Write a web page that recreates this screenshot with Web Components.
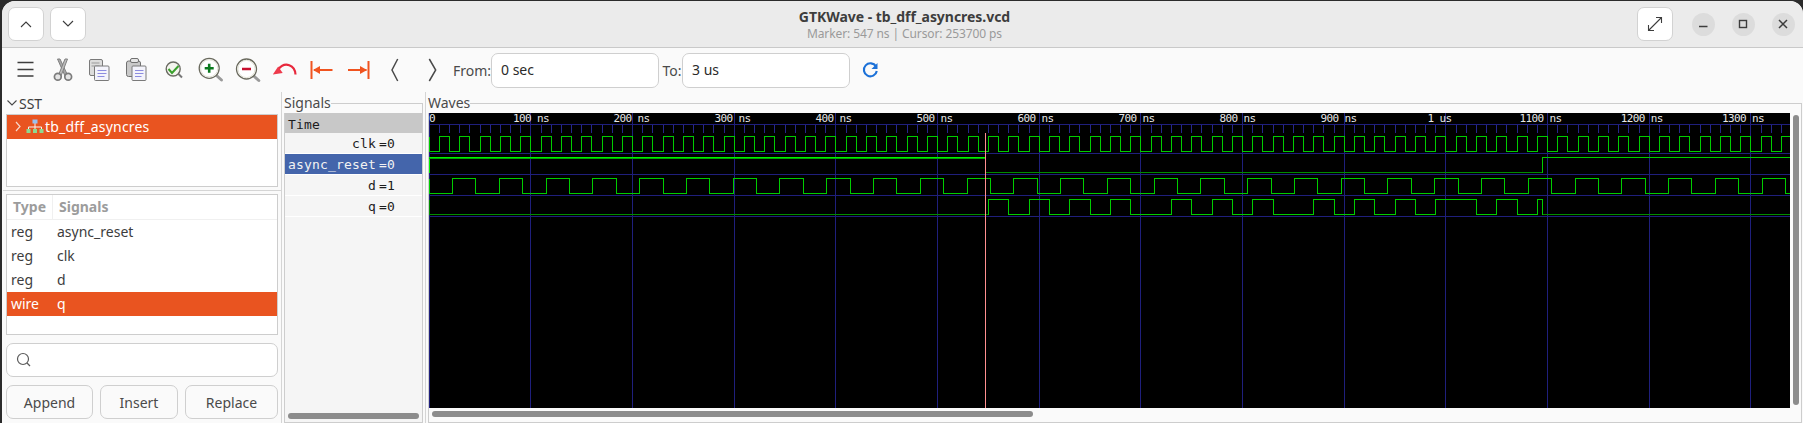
<!DOCTYPE html>
<html lang="en">
<head>
<meta charset="utf-8">
<title>GTKWave - tb_dff_asyncres.vcd</title>
<style>
  html, body { margin: 0; height: 100%; overflow: hidden; background: #2b2b2b; }
  body { font-family: "Noto Sans", sans-serif; font-size: 14px; color: #3d3d3d; }
</style>
</head>
<body>
<gw-window>
  <gw-headerbar slot="header" heading="GTKWave - tb_dff_asyncres.vcd" sub="Marker: 547 ns | Cursor: 253700 ps"></gw-headerbar>
  <gw-toolbar slot="toolbar"></gw-toolbar>
  <gw-sst-pane slot="panes"></gw-sst-pane>
  <gw-signal-pane slot="panes"></gw-signal-pane>
  <gw-wave-pane slot="panes"></gw-wave-pane>
</gw-window>

<script>
/**
 * Small helper, every element gets an open shadow root from a string.
 *
 * @param {string} name - The tag name.
 * @param {string} html - Markup and styles of the shadow root.
 * @param {Function} [ready] - Called with the element after the root is filled.
 */
function define (name, html, ready) {
  const template = document.createElement('template')
  template.innerHTML = html
  customElements.define(name, class extends HTMLElement {
    constructor () {
      super()
      this.attachShadow({ mode: 'open' }).appendChild(template.content.cloneNode(true))
    }

    connectedCallback () {
      if (ready) ready(this)
    }
  })
}

define('gw-window', `
  <style>
    :host { display: flex; flex-direction: column; height: 422px; margin: 1px 0 0 2px; background: #fafafa; border-radius: 13px 13px 0 0; overflow: hidden; }
    .panes { display: flex; flex: 1; min-height: 0; }
  </style>
  <slot name="header"></slot>
  <slot name="toolbar"></slot>
  <div class="panes"><slot name="panes"></slot></div>
`)

define('gw-headerbar', `
  <style>
    :host { display: grid; grid-template-columns: 1fr auto 1fr; align-items: start; height: 47px; box-sizing: border-box; background: #ebebeb; border-bottom: 1px solid #c9c9c9; }
    .left, .right { display: flex; align-items: center; padding-top: 6px; }
    .left { gap: 6px; padding-left: 6px; }
    .right { justify-content: flex-end; padding-right: 8.500px; }
    .btn { width: 36px; height: 34px; box-sizing: border-box; background: #fff; border: 1px solid #d2d2d2; border-radius: 7px; display: flex; align-items: center; justify-content: center; }
    .right .btn { margin-right: 2px; }
    .round { width: 23px; height: 23px; border-radius: 50%; background: #dcdcdc; margin-left: 17px; display: flex; align-items: center; justify-content: center; }
    .center { text-align: center; padding: 6px 0 0 4px; }
    h1 { margin: 0; font: 700 14px/20px "Noto Sans", sans-serif; color: #3d3d3d; letter-spacing: -.04px; }
    p { margin: -1px 0 0; font: 12px/16px "Noto Sans", sans-serif; color: #9a9a9a; letter-spacing: -.1px; }
    svg { display: block; fill: none; stroke: #3d3d3d; }
  </style>
  <div class="left">
    <div class="btn"><svg width="14" height="10" stroke-width="1.100"><path d="M2 8 7 3l5 5"/></svg></div>
    <div class="btn"><svg width="14" height="10" stroke-width="1.100"><path d="M2 2l5 5 5-5"/></svg></div>
  </div>
  <div class="center"><h1 id="heading"></h1><p id="sub"></p></div>
  <div class="right">
    <div class="btn"><svg width="18" height="18" stroke-width="1.100"><path d="M2.500 15.500 15.500 2.500M10 2.500h5.500V8M2.500 10v5.500H8"/></svg></div>
    <div class="round"><svg width="10" height="10" stroke-width="1.400"><path d="M1 7.500h8.500"/></svg></div>
    <div class="round"><svg width="10" height="10" stroke-width="1.400"><rect x="1.500" y="1.500" width="7" height="7"/></svg></div>
    <div class="round"><svg width="10" height="10" stroke-width="1.500"><path d="M1 1l8 8M9 1 1 9"/></svg></div>
  </div>
`, el => {
  el.shadowRoot.querySelector('#heading').textContent = el.getAttribute('heading')
  el.shadowRoot.querySelector('#sub').textContent = el.getAttribute('sub')
})

// toolbar icons, drawn in a 37x44 box per button
const ICONS = {
  menu: '<path d="M10.500 14.500h16M10.500 21.500h16M10.500 28h16" stroke="#3d3d3d" stroke-width="1.500"/>',
  cut: `<path d="M13.500 11h2.500l7.500 16-2.500 1z" fill="#a8a8a8" stroke="#808080"/>
    <path d="M23.500 11H21l-6.500 16 2.500 1z" fill="#bcbcbc" stroke="#808080"/>
    <circle cx="13.800" cy="28.700" r="3.400" fill="#e4e4e4" stroke="#7c7c7c" stroke-width="1.700"/>
    <circle cx="24.200" cy="28.700" r="3.400" fill="#e4e4e4" stroke="#7c7c7c" stroke-width="1.700"/>`,
  copy: `<rect x="8.500" y="11.500" width="13" height="16" rx="1.500" fill="#dcdcdc" stroke="#7a7a7a"/>
    <path d="M10.500 15h8M10.500 18h8" stroke="#999"/>
    <rect x="13.500" y="18" width="14.500" height="14.500" rx="1" fill="#f3f3fb" stroke="#7a7a7a"/>
    <path d="M16.500 22.500h9M16.500 25.500h9M16.500 28.500h7" stroke="#8c8ce0"/>`,
  paste: `<rect x="8.500" y="13" width="14" height="15.500" rx="2" fill="#c9c9c9" stroke="#707070"/>
    <rect x="12.500" y="10.500" width="8" height="4" rx="1.500" fill="#e6e6e6" stroke="#707070"/>
    <rect x="14" y="18" width="14" height="14.500" rx="1" fill="#f3f3fb" stroke="#7a7a7a"/>
    <path d="M17 22.500h8.500M17 25.500h8.500M17 28.500h6.500" stroke="#8c8ce0"/>`,
  check: `<path d="M23.500 26l3.500 3.500" stroke="#777" stroke-width="2"/>
    <circle cx="18.200" cy="21" r="7" fill="#f4f4ee" stroke="#6a6a62" stroke-width="1.400"/>
    <path d="M13.500 21l3.500 4 6.500-7" fill="none" stroke="#3aa02c" stroke-width="2"/>`,
  zoomin: `<path d="M24.500 27.500l5 4.500" stroke="#9a9a9a" stroke-width="3" stroke-linecap="round"/>
    <circle cx="17.200" cy="20.300" r="10" fill="#fff" stroke="#6a6a5e" stroke-width="1.300"/>
    <circle cx="17.200" cy="20.300" r="8.600" fill="none" stroke="#e2e2d6"/>
    <path d="M12.700 20.300h9M17.200 15.800v9" stroke="#0b7a1e" stroke-width="2.600"/>`,
  zoomout: `<path d="M24.800 28l5 4.500" stroke="#9a9a9a" stroke-width="3" stroke-linecap="round"/>
    <circle cx="17.500" cy="21" r="10" fill="#fff" stroke="#6a6a5e" stroke-width="1.300"/>
    <circle cx="17.500" cy="21" r="8.600" fill="none" stroke="#e2e2d6"/>
    <path d="M13 21h9" stroke="#c8102e" stroke-width="2.600"/>`,
  undo: `<path d="M29.500 26.500C29 17 19 13 12.500 21" fill="none" stroke="#e8283c" stroke-width="2.200"/>
    <path d="M6.800 26.500 12.200 18.500l4.500 6.500z" fill="#ee3a4c"/>`,
  first: `<path d="M8.500 13v18M11 22h18.500" stroke="#f0531f" stroke-width="2"/>
    <path d="M10 22l7-4v8z" fill="#f0531f"/>`,
  last: `<path d="M28.500 13v18M8 22h18.500" stroke="#f0531f" stroke-width="2"/>
    <path d="M27 22l-7-4v8z" fill="#f0531f"/>`,
  prev: '<path d="M20.700 11 15 22l5.700 11" fill="none" stroke="#4a4a4a" stroke-width="1.500"/>',
  next: '<path d="M15.300 11 21.700 22l-6.400 11" fill="none" stroke="#4a4a4a" stroke-width="1.500"/>',
  refresh: `<path d="M24 18.500a6.500 6.500 0 1 0 .8 4.500" fill="none" stroke="#1c71d8" stroke-width="2.100"/>
    <path d="M25.500 15v6h-6z" fill="#1c71d8"/>`
}

define('gw-tool', `
  <style>
    :host { display: block; width: 37px; height: 44px; flex: none; }
    svg { display: block; }
  </style>
  <svg width="37" height="44" viewBox="0 0 37 44"></svg>
`, el => {
  el.shadowRoot.querySelector('svg').innerHTML = ICONS[el.getAttribute('icon')]
})

define('gw-entry', `
  <style>
    :host { display: flex; align-items: center; box-sizing: border-box; height: 35px; padding: 0 0 2px 9px; background: #fff; border: 1px solid #cfcfcf; border-radius: 7px; font: 14px "Noto Sans", sans-serif; color: #2a2a2a; }
  </style>
  <slot></slot>
`)

define('gw-toolbar', `
  <style>
    :host { display: flex; align-items: center; height: 44px; padding-left: 4.5px; background: #fafafa; font: 14px "Noto Sans", sans-serif; color: #4a4a4a; }
    .from { width: 38px; margin-left: 2.500px; }
    .to { width: 19.500px; margin-left: 3.500px; }
    gw-entry { width: 168px; }
    .refresh { margin-left: 1.500px; }
  </style>
  <gw-tool icon="menu"></gw-tool><gw-tool icon="cut"></gw-tool><gw-tool icon="copy"></gw-tool><gw-tool icon="paste"></gw-tool>
  <gw-tool icon="check"></gw-tool><gw-tool icon="zoomin"></gw-tool><gw-tool icon="zoomout"></gw-tool><gw-tool icon="undo"></gw-tool>
  <gw-tool icon="first"></gw-tool><gw-tool icon="last"></gw-tool><gw-tool icon="prev"></gw-tool><gw-tool icon="next"></gw-tool>
  <span class="from">From:</span><gw-entry>0 sec</gw-entry>
  <span class="to">To:</span><gw-entry>3 us</gw-entry>
  <gw-tool class="refresh" icon="refresh"></gw-tool>
`)

define('gw-sst-pane', `
  <style>
    :host { display: flex; flex-direction: column; width: 280px; box-sizing: border-box; padding: 0 3px 0 4px; border-right: 1px solid #d5d5d5; font: 14px "Noto Sans", sans-serif; color: #3d3d3d; }
    .expander { display: flex; align-items: center; height: 22px; }
    .tree, .list { box-sizing: border-box; background: #fff; border: 1px solid #cdcdcd; }
    .tree { height: 73px; }
    .tree-row { display: flex; align-items: center; height: 24px; background: #e95420; color: #fff; letter-spacing: .2px; }
    .tree-row span { padding-bottom: 2px; }
    .rule { height: 1px; margin: 3px -3px 0 -3px; background: #d5d5d5; }
    .list { height: 141px; margin-top: 3px; }
    .row { display: grid; grid-template-columns: 46px 1fr; height: 24px; line-height: 24px; }
    .row span { padding-left: 4px; }
    .head { height: 25px; line-height: 23px; font-weight: 700; color: #9c9c9c; border-bottom: 1px solid #f0f0f0; box-sizing: border-box; }
    .head span { padding-left: 6px; }
    .head span:first-child { border-right: 1px solid #f0f0f0; }
    .picked { background: #e95420; color: #fff; }
    .search { display: flex; align-items: center; box-sizing: border-box; height: 34px; margin-top: 8px; padding-left: 9px; background: #fff; border: 1px solid #cfcfcf; border-radius: 7px; }
    .buttons { display: grid; grid-template-columns: 87px 78px 93px; gap: 7px; margin-top: 8px; }
    .buttons div { height: 34px; line-height: 33px; box-sizing: border-box; text-align: center; border: 1px solid #cfcfcf; border-radius: 7px; background: #fafafa; color: #4a4a4a; }
    svg { display: block; flex: none; }
  </style>
  <div class="expander">
    <svg width="13.500" height="12" style="margin-left:-0.5px"><path d="M1.500 3.500l4.500 4.500 4.500-4.500" fill="none" stroke="#4a4a4a" stroke-width="1.100"/></svg><span>SST</span>
  </div>
  <div class="tree">
    <div class="tree-row">
      <svg width="38" height="24" viewBox="0 0 38 24">
        <path d="M9 7l4 4.500L9 16" fill="none" stroke="#f6d8cc" stroke-width="1.200"/>
        <path d="M28 8v4M21.500 14v-2h13v2M28 12v2" fill="none" stroke="#f4f4f4"/>
        <rect x="25.500" y="4.500" width="5" height="4" fill="#9cc0ee"/>
        <rect x="19.500" y="14" width="4" height="4" fill="#8fd88f"/>
        <rect x="26" y="14" width="4" height="4" fill="#8fd88f"/>
        <rect x="32.500" y="14" width="4" height="4" fill="#8fd88f"/>
      </svg>
      <span>tb_dff_asyncres</span>
    </div>
  </div>
  <div class="rule"></div>
  <div class="list">
    <div class="row head"><span>Type</span><span>Signals</span></div>
    <div class="row"><span>reg</span><span>async_reset</span></div>
    <div class="row"><span>reg</span><span>clk</span></div>
    <div class="row"><span>reg</span><span>d</span></div>
    <div class="row picked"><span>wire</span><span>q</span></div>
  </div>
  <div class="search">
    <svg width="16" height="16"><circle cx="7" cy="7" r="5.500" fill="none" stroke="#5a5a5a" stroke-width="1.200"/><path d="M11 11l3 3" stroke="#5a5a5a" stroke-width="1.200"/></svg>
  </div>
  <div class="buttons"><div>Append</div><div>Insert</div><div>Replace</div></div>
`)

define('gw-frame', `
  <style>
    :host { display: flex; flex-direction: column; margin-bottom: 2px; font: 14px "Noto Sans", sans-serif; color: #4a4a4a; }
    .head { display: flex; height: 21px; flex: none; line-height: 21px; }
    .line { flex: 1; margin-top: 11px; border-top: 1px solid #cdcdcd; border-right: 1px solid #cdcdcd; }
    .body { flex: 1; min-height: 0; display: flex; flex-direction: column; border: 1px solid #cdcdcd; border-top: 0; }
  </style>
  <div class="head"><span id="label"></span><div class="line"></div></div>
  <div class="body"><slot></slot></div>
`, el => {
  el.shadowRoot.querySelector('#label').textContent = el.getAttribute('label')
})

define('gw-signal-pane', `
  <style>
    :host { display: block; width: 144px; box-sizing: border-box; padding: 0 2px; border-right: 1px solid #d5d5d5; }
    gw-frame { height: 100%; box-sizing: border-box; }
    .inner { flex: 1; display: flex; flex-direction: column; height: 100%; background: #f5f5f5; font: 13px "DejaVu Sans Mono", monospace; letter-spacing: .17px; color: #1c1c1c; }
    .time { height: 20px; line-height: 24px; padding-left: 3px; background: #c8c8c8; }
    .row { display: flex; height: 21px; line-height: 22px; box-sizing: border-box; border-bottom: 1px solid #fff; }
    .name { width: 91px; text-align: right; white-space: pre; }
    .val { margin-left: 3px; }
    .on { background: #4465ab; color: #f2f2f2; }
    .bar { height: 6px; margin: auto 3px 3px; background: #8c8c8c; border-radius: 3px; }
  </style>
  <gw-frame label="Signals">
    <div class="inner">
      <div class="time">Time</div>
      <div class="row"><span class="name">clk</span><span class="val">=0</span></div>
      <div class="row on"><span class="name">async_reset</span><span class="val">=0</span></div>
      <div class="row"><span class="name">d</span><span class="val">=1</span></div>
      <div class="row"><span class="name">q</span><span class="val">=0</span></div>
      <div class="bar"></div>
    </div>
  </gw-frame>
`)

define('gw-wave-pane', `
  <style>
    :host { display: block; flex: 1; min-width: 0; box-sizing: border-box; padding: 0 1px 0 2px; }
    gw-frame { height: 100%; box-sizing: border-box; }
    .grid { display: grid; grid-template-columns: 1361px 1fr; grid-template-rows: 295px 1fr; height: 100%; }
    .vbar { width: 6px; margin: 2px 0 3px 3px; background: #8c8c8c; border-radius: 3px; }
    .hbar { width: 601px; height: 6px; margin: 3px 0 0 3px; background: #8c8c8c; border-radius: 3px; }
  </style>
  <gw-frame label="Waves">
    <div class="grid">
      <gw-wave-view></gw-wave-view>
      <div class="vbar"></div>
      <div class="hbar"></div>
    </div>
  </gw-frame>
`)

// the canvas uses page coordinates through its viewBox, that keeps the numbers readable
define('gw-wave-view', `
  <style>
    :host { display: block; width: 1361px; height: 295px; background: #000; }
    svg { display: block; shape-rendering: crispEdges; }
    text { font: 11px "DejaVu Sans Mono", monospace; letter-spacing: -.62px; fill: #e6e6e6; }
  </style>
  <svg width="1361" height="295" viewBox="429 113 1361 295"></svg>
`, el => {
  const GRID = '#1f1f7c'
  const X = ns => Math.round(428.7 + ns * 1.0167) + 0.5
  const END = 1340

  // builds a step line from the start level and the times where it toggles
  const stepPath = (hi, lo, times) => {
    let up = false
    let d = `M${X(0)} ${hi}V${lo}`
    for (const t of times) {
      d += `H${X(t)}V${up ? lo : hi}`
      up = !up
    }
    return d + 'H1790'
  }
  const every = (first, step) => {
    const out = []
    for (let t = first; t < END; t += step) out.push(t)
    return out
  }

  let out = ''
  for (let ns = 0; ns < END; ns += 10) {
    if (ns % 100) out += `<path d="M${X(ns)} 125V133" stroke="#26268c"/>`
  }
  for (let ns = 0; ns < END; ns += 100) {
    out += `<path d="M${X(ns)} 113V408" stroke="${GRID}"/>`
  }
  for (const y of [124.5, 153.5, 174.5, 195.5, 216.5]) {
    out += `<path d="M429 ${y}H1790" stroke="${GRID}"/>`
  }

  const labels = [[429, '0'], [513, '100 ns'], [613.5, '200 ns'], [714.5, '300 ns'], [815.5, '400 ns'],
    [916.5, '500 ns'], [1017.5, '600 ns'], [1118.5, '700 ns'], [1219.5, '800 ns'], [1320.5, '900 ns'],
    [1427.5, '1 us'], [1519.5, '1100 ns'], [1620.8, '1200 ns'], [1722, '1300 ns']]
  for (const [x, label] of labels) {
    out += `<text x="${x}" y="122" xml:space="preserve">${label}</text>`
  }

  const wave = (d, color) => `<path d="${d}" fill="none" stroke="${color}"/>`
  const GREEN = '#00cc00'
  const DARK = '#008c00'

  out += wave(stepPath(136.5, 151.5, every(10, 10)), GREEN)
  out += wave(`M${X(0)} 172.5V157.5H${X(547)}`, '#00f000')
  out += `<path d="M429 158.5H${X(547)}" stroke="#00a800"/>`
  out += wave(`M${X(547)} 172.5H${X(1095)}`, DARK)
  out += wave(`M${X(1095)} 172.5V157.5H1790`, GREEN)
  out += wave(stepPath(178.5, 193.5, every(23, 23)), GREEN)

  const q = [550, 570, 590, 610, 630, 650, 670, 690, 730, 750, 770, 790, 810, 830, 870, 890, 910, 930, 950, 970, 990, 1030, 1050, 1070, 1090, 1095]
  let qPath = `M${X(550)} 214.5`
  q.forEach((t, i) => {
    if (i) qPath += `H${X(t)}`
    qPath += `V${i % 2 ? 214.5 : 199.5}`
  })
  out += wave(`M${X(0)} 199.5V214.5H${X(550)}`, DARK)
  out += wave(qPath, GREEN)
  out += wave(`M${X(1095)} 214.5H1790`, DARK)

  out += '<path d="M985.5 133V408" stroke="#ff8f8f"/>'
  el.shadowRoot.querySelector('svg').innerHTML = out
})
</script>
</body>
</html>
